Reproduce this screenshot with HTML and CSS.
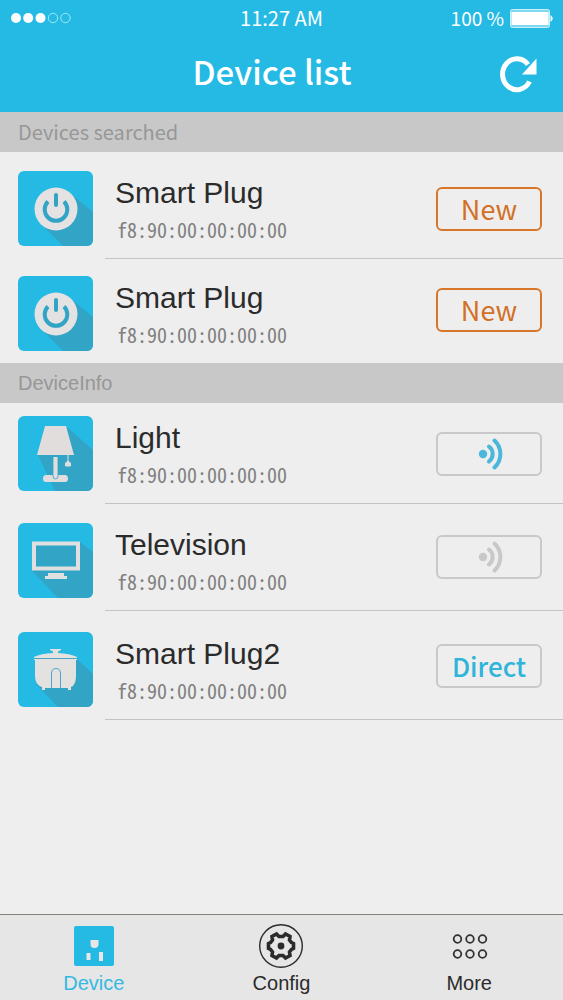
FILE: index.html
```html
<!DOCTYPE html>
<html lang="en">
<head>
<meta charset="utf-8">
<meta name="viewport" content="width=device-width, initial-scale=1">
<title>Device list</title>
<link rel="stylesheet" href="styles.css">
</head>
<body>
<svg class="defs" width="0" height="0" aria-hidden="true">
  <defs>
    <symbol id="plug" viewBox="0 0 75 75">
      <path d="M53 23 75 41V75H45L24 54Z" fill="#32a4c5"/>
      <circle cx="38" cy="38" r="21.500" fill="#e4e2e2"/>
      <path d="M30 30.500A11.300 11.300 0 1 0 46 30.500" fill="none" stroke="#32a4c5" stroke-width="4"/>
      <path d="M38 24V34" stroke="#32a4c5" stroke-width="4" stroke-linecap="round"/>
    </symbol>
    <symbol id="signal" viewBox="0 0 26 32">
      <circle cx="5" cy="16" r="4.200" fill="currentColor"/>
      <path d="M11 8.500A9.500 9.500 0 0 1 11 23.500M16.500 2.500A18.500 18.500 0 0 1 16.500 29.500" fill="none" stroke="currentColor" stroke-width="4" stroke-linecap="round"/>
    </symbol>
  </defs>
</svg>
<header class="header">
  <div class="status">
    <svg class="dots" viewBox="0 0 62 12" role="img" aria-label="Signal strength">
      <g fill="#fff"><circle cx="6" cy="6" r="5"/><circle cx="18.200" cy="6" r="5"/><circle cx="30.500" cy="6" r="5"/></g>
      <g fill="none" stroke="#9fe8f5" stroke-width="1"><circle cx="43" cy="6" r="4.700"/><circle cx="55.500" cy="6" r="4.700"/></g>
    </svg>
    <span class="time">11:27 AM</span>
    <span class="power">100 %
      <svg class="battery" viewBox="0 0 43 19" role="img" aria-label="Battery full">
        <rect x=".5" y=".5" width="39" height="18" rx="2" fill="#7ed8f0" stroke="#c9f1fa"/>
        <rect x="1.500" y="3" width="37" height="13" fill="#fff"/>
        <path d="M40.500 6Q45 9.500 40.500 13Z" fill="#fff"/>
      </svg>
    </span>
  </div>
  <div class="titlebar">
    <h1 class="title">Device list</h1>
    <button class="refresh" type="button" aria-label="Refresh">
      <svg viewBox="0 0 38 38"><path d="M30.500 26.500A14.300 15.500 0 1 1 29 9.500" fill="none" stroke="#fff" stroke-width="5"/><path d="M37.500 3.500V19.500H23Z" fill="#fff"/></svg>
    </button>
  </div>
</header>
<main class="content">
  <h2 class="section section-search">Devices searched</h2>
  <ul class="list">
    <li class="row pad-mid">
      <svg class="icon"><use href="#plug"/></svg>
      <div class="body">
        <div class="info"><h3 class="name">Smart Plug</h3><p class="mac">f8:90:00:00:00:00</p></div>
        <button class="action new" type="button">New</button>
      </div>
    </li>
    <li class="row pad-snug">
      <svg class="icon"><use href="#plug"/></svg>
      <div class="body">
        <div class="info"><h3 class="name">Smart Plug</h3><p class="mac">f8:90:00:00:00:00</p></div>
        <button class="action new" type="button">New</button>
      </div>
    </li>
  </ul>
  <h2 class="section">DeviceInfo</h2>
  <ul class="list list-known">
    <li class="row pad-tight">
      <svg class="icon" viewBox="0 0 75 75">
        <path d="M50 12 75 34V75H37L20 39Z" fill="#32a4c5"/>
        <path d="M27 10H48L56 39H19Z" fill="#e1dddd"/>
        <path d="M50 39V45M50 45L52.500 47V50H47.500V47Z" fill="#e1dddd" stroke="#e1dddd"/>
        <path d="M28 59H35V41H40V59H47Q50 59 50 62.500T47 66H28Q25 66 25 62.500T28 59Z" fill="#e1dddd"/>
        <path d="M35 41V60Q35 63 37.500 63T40 60V41" fill="none" stroke="#32a4c5" stroke-width=".8"/>
      </svg>
      <div class="body">
        <div class="info"><h3 class="name">Light</h3><p class="mac">f8:90:00:00:00:00</p></div>
        <button class="action online" type="button" aria-label="Light connected"><svg class="signal"><use href="#signal"/></svg></button>
      </div>
    </li>
    <li class="row pad-mid">
      <svg class="icon" viewBox="0 0 75 75">
        <path d="M62 19 75 29V75H40L14 48Z" fill="#32a4c5"/>
        <rect x="16" y="20.500" width="44" height="25" fill="#32a4c5" stroke="#e0e0e0" stroke-width="4"/>
        <path d="M30 50H46V53H49V56H27V53H30Z" fill="#e0e0e0"/>
      </svg>
      <div class="body">
        <div class="info"><h3 class="name">Television</h3><p class="mac">f8:90:00:00:00:00</p></div>
        <button class="action offline" type="button" aria-label="Television disconnected"><svg class="signal"><use href="#signal"/></svg></button>
      </div>
    </li>
    <li class="row pad-loose">
      <svg class="icon" viewBox="0 0 75 75">
        <path d="M59 27 75 42V75H40L18 52Z" fill="#32a4c5"/>
        <path d="M16 25Q23 21.500 35 21V19.500L32 18V17H43V18L40 19.500V21Q52 21.500 59 25V28H58V44Q58 53 53 55V58H50V56H27V58H24V55Q17 53 17 44V28H16Z" fill="#e4e1e1"/>
        <path d="M16 26.500H60" stroke="#48a8c4" fill="none"/>
        <path d="M33.500 56V41Q34 36.500 38 36.500T42.500 41V56" stroke="#48a8c4" fill="none"/>
      </svg>
      <div class="body">
        <div class="info"><h3 class="name">Smart Plug2</h3><p class="mac">f8:90:00:00:00:00</p></div>
        <button class="action direct" type="button">Direct</button>
      </div>
    </li>
  </ul>
</main>
<nav class="tabs">
  <a class="tab active" href="#device">
    <svg class="tab-icon" viewBox="0 0 44 44"><rect x="2" y="2" width="40" height="40" rx="2" fill="#25bae4"/><path d="M18.500 16H26.500V20Q26.500 24 22.500 24T18.500 20ZM14.500 29H18.500V36H14.500ZM27 28H31V37H27Z" fill="#e8e6e6"/></svg>
    Device
  </a>
  <a class="tab" href="#config">
    <svg class="tab-icon" viewBox="0 0 44 44" fill="none" stroke="#2b2b2b">
      <circle cx="22" cy="22" r="21.300" stroke-width="1.400"/>
      <path d="M17.500 10 20 12.500H24L26.500 10 31 12.500 30.500 16 32.500 18.500 34.500 19.500V24.500L32.500 25.500 30.500 28 31 31.500 26.500 34 24 31.500H20L17.500 34 13 31.500 13.500 28 11.500 25.500 9.500 24.500V19.500L11.500 18.500 13.500 16 13 12.500Z" stroke-width="3.600"/>
      <circle cx="22" cy="22" r="3.400" fill="#2b2b2b" stroke="none"/>
    </svg>
    Config
  </a>
  <a class="tab" href="#more">
    <svg class="tab-icon" viewBox="0 0 44 44" fill="none" stroke="#333" stroke-width="1.800"><circle cx="10.500" cy="15" r="3.800"/><circle cx="23" cy="15" r="3.800"/><circle cx="35.500" cy="15" r="3.800"/><circle cx="10.500" cy="30" r="3.800"/><circle cx="23" cy="30" r="3.800"/><circle cx="35.500" cy="30" r="3.800"/></svg>
    More
  </a>
</nav>
</body>
</html>
```
FILE: styles.css
```css
* { box-sizing: border-box; }
body {
  display: flex;
  flex-direction: column;
  min-height: 100vh;
  margin: 0;
  background: #eee;
  color: #2b2b2b;
  font-family: "Liberation Sans", Arial, sans-serif;
}
h1, h2, h3, p, ul { margin: 0; padding: 0; font-weight: 400; }
button { margin: 0; padding: 0; border: 0; background: none; cursor: pointer; }
svg { display: block; }
.defs { position: absolute; }

.header, .section-search, .action {
  font-family: "Noto Sans CJK SC", "Open Sans", sans-serif;
}
.header { background: #25bae4; color: #fff; }
.status {
  display: grid;
  grid-template-columns: 1fr auto 1fr;
  align-items: center;
  height: 36px;
  padding: 0 10px;
  font-size: 19px;
  line-height: 34px;
}
.time { font-size: 20px; }
.dots { width: 62px; height: 12px; }
.power { display: flex; justify-content: flex-end; align-items: center; gap: 6px; }
.battery { width: 43px; height: 19px; }
.titlebar {
  display: grid;
  grid-template-columns: 71px 1fr 90px;
  align-items: center;
  height: 76px;
}
.title {
  grid-column: 2;
  padding-bottom: 6px;
  font-size: 33px;
  font-weight: 500;
  line-height: 44px;
  text-align: center;
}
.refresh { justify-self: center; }
.refresh svg { width: 38px; height: 38px; }

.section {
  padding: 0 18px;
  background: #c8c8c8;
  color: #979797;
  font-size: 20px;
  line-height: 40px;
}

.list { list-style: none; }
.row { display: flex; gap: 12px; padding-left: 18px; }
.pad-tight { --top: 13px; }
.pad-snug { --top: 17px; }
.pad-mid { --top: 19px; }
.pad-loose { --top: 21px; }
.icon {
  flex: none;
  width: 75px;
  height: 75px;
  margin-top: var(--top);
  border-radius: 6px;
  background: #25bae4;
}
.body {
  display: flex;
  flex: 1;
  align-items: center;
  justify-content: space-between;
  padding: var(--top) 21px 12px 10px;
  border-bottom: 1px solid #c4c4c4;
}
.list:not(.list-known) .row:last-child .body { border-bottom: 0; }
.info { height: 75px; padding-top: 4px; }
.name { font-size: 30px; line-height: 36px; }
.mac {
  margin-top: 7px;
  padding-left: 2px;
  color: #808080;
  font: 20px/24px "Noto Sans Mono CJK SC", "Liberation Mono", monospace;
}
.action {
  display: grid;
  place-items: center;
  width: 106px;
  height: 44px;
  border: 2px solid #c8c8c8;
  border-radius: 6px;
  font-size: 27px;
  line-height: 38px;
}
.row:not(:first-child) .action { margin-bottom: 7px; }
.new { border-color: #d8762a; color: #d27025; }
.direct { color: #2fb4da; font-size: 26px; font-weight: 500; }
.online { color: #4bb7dc; }
.offline { color: #c8c8c8; }
.signal { width: 26px; height: 32px; margin-left: 4px; }

.tabs {
  display: grid;
  grid-template-columns: repeat(3, 1fr);
  margin-top: auto;
  padding: 9px 0 5px;
  border-top: 1px solid #85837b;
  background: #e6e6e6;
}
.tab {
  display: flex;
  flex-direction: column;
  align-items: center;
  gap: 3px;
  color: #2b2b2b;
  font-size: 20px;
  line-height: 24px;
  text-decoration: none;
}
.tab-icon { width: 44px; height: 44px; }
.active { color: #35b9e2; }
```
